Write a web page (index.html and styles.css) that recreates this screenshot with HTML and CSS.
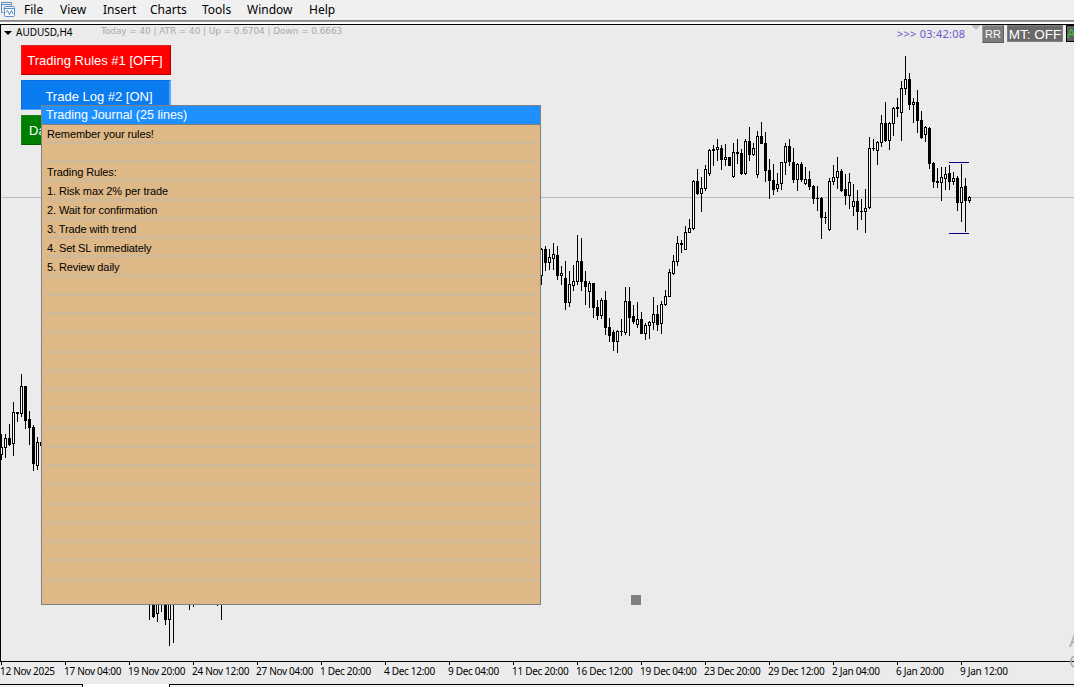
FILE: index.html
```html
<!DOCTYPE html>
<html>
<head>
  <meta charset="utf-8">
  <title>AUDUSD,H4</title>
  <link rel="stylesheet" href="styles.css">
</head>
<body>
  <div class="menubar">
    <svg class="app-icon" width="16" height="16" viewBox="0 0 16 16" fill="none" stroke="#5b8fc7">
      <path d="M3.500 10.500H1.500V.5h10v3"/>
      <path d="M1.500 2.500h10M3.500 6.500l2-2"/>
      <rect x="4.500" y="4.500" width="10" height="10" rx="1" fill="#f4f8fc"/>
      <path d="M4.500 6.500h10M6 10.500l1.500-2 2 4 2-4 1.500 3.500"/>
    </svg>
    <span class="menu-file">File</span>
    <span class="menu-view">View</span>
    <span class="menu-insert">Insert</span>
    <span class="menu-charts">Charts</span>
    <span class="menu-tools">Tools</span>
    <span class="menu-window">Window</span>
    <span class="menu-help">Help</span>
  </div>

  <div class="chart">
    <svg id="candles" class="candles" width="1073" height="636" viewBox="1 25 1073 636" shape-rendering="crispEdges"></svg>

    <div class="chart-header">
      <span class="arrow"></span>
      <span class="symbol">AUDUSD,H4</span>
      <span class="atr">Today = 40 | ATR = 40 | Up = 0.6704 | Down = 0.6663</span>
      <span class="timer">&gt;&gt;&gt; 03:42:08</span>
      <span class="shift-mark"></span>
      <span class="tag tag-rr">RR</span>
      <span class="tag tag-mt">MT: OFF</span>
      <span class="tag tag-a">A</span>
    </div>

    <div class="toggles">
      <div class="toggle red">Trading Rules #1 [OFF]</div>
      <div class="toggle blue">Trade Log #2 [ON]</div>
      <div class="toggle green">Da</div>
    </div>

    <div class="journal">
      <div class="journal-title">Trading Journal (25 lines)</div>
      <div class="journal-lines" id="lines"></div>
    </div>

    <div class="handle"></div>
  </div>

  <div class="axis" id="axis"></div>
  <div class="tabs">
    <div class="tab-left"></div>
    <div class="tab-active"></div>
    <div class="tab-rest"></div>
  </div>
  <div class="watermark">A<br>G</div>

  <script>
    // first candle x, then [high, open/close top, open/close bottom, low, filled]
    const runs = [
      [1, [
        [434, 447, 455, 460, 0], [434, 438, 448, 458, 0], [424, 438, 445, 446, 1],
        [402, 412, 444, 456, 0], [412, 412, 414, 422, 1], [374, 386, 414, 417, 0],
        [386, 386, 421, 429, 1], [411, 419, 428, 445, 1], [425, 427, 464, 471, 1],
        [437, 442, 466, 470, 0], [442, 442, 446, 446, 1]
      ]],
      [149, [
        [600, 600, 601, 620, 1], [600, 600, 617, 618, 1], [600, 600, 614, 622, 0],
        [600, 600, 601, 612, 1], [600, 600, 620, 625, 1], [600, 600, 620, 646, 0],
        [600, 600, 601, 643, 1]
      ]],
      [189, [[600, 600, 601, 610, 1], [600, 600, 601, 607, 1]]],
      [217, [[600, 600, 601, 606, 1], [600, 600, 601, 620, 1]]],
      [541, [
        [248, 249, 276, 285, 0], [246, 249, 263, 271, 1], [249, 257, 263, 270, 0],
        [243, 254, 259, 270, 0], [246, 255, 276, 280, 1], [266, 273, 276, 285, 0],
        [261, 278, 303, 310, 1], [271, 284, 303, 307, 0], [265, 281, 286, 291, 0],
        [235, 261, 282, 285, 0], [238, 261, 282, 291, 1], [271, 281, 287, 305, 1],
        [281, 283, 292, 308, 0], [283, 283, 308, 318, 1], [300, 307, 316, 320, 1],
        [298, 300, 316, 319, 0], [291, 300, 328, 335, 1], [318, 327, 336, 342, 1],
        [330, 332, 342, 351, 1], [330, 331, 342, 353, 0], [319, 331, 332, 336, 1],
        [287, 301, 333, 335, 0], [287, 301, 318, 336, 1], [305, 316, 322, 324, 1],
        [302, 319, 325, 328, 0], [312, 319, 334, 334, 1], [323, 325, 334, 340, 0],
        [321, 322, 326, 339, 0], [297, 314, 323, 330, 0], [305, 314, 325, 331, 1],
        [301, 304, 324, 334, 0], [290, 296, 305, 306, 0], [269, 272, 297, 297, 0],
        [255, 261, 274, 275, 0], [236, 243, 262, 266, 0], [240, 243, 245, 253, 1],
        [226, 232, 250, 250, 0], [219, 228, 233, 233, 0], [180, 181, 229, 230, 0],
        [169, 181, 194, 195, 1], [177, 188, 194, 212, 0], [165, 169, 189, 191, 0],
        [149, 150, 174, 176, 0], [145, 149, 151, 166, 1], [139, 147, 150, 161, 0],
        [145, 148, 160, 170, 1], [144, 157, 160, 166, 0], [157, 157, 166, 166, 1],
        [143, 152, 177, 178, 0], [139, 152, 154, 164, 1], [149, 153, 174, 175, 1],
        [139, 141, 174, 175, 0], [127, 141, 155, 161, 1], [143, 148, 155, 156, 0],
        [131, 136, 175, 178, 0], [122, 136, 144, 144, 1], [132, 143, 171, 182, 1],
        [159, 170, 181, 199, 1], [164, 180, 190, 195, 1], [173, 184, 189, 192, 0],
        [162, 162, 184, 190, 0], [143, 146, 163, 175, 0], [139, 146, 162, 166, 1],
        [148, 162, 180, 183, 1], [163, 164, 180, 191, 0], [162, 164, 180, 182, 1],
        [167, 179, 184, 185, 0], [171, 179, 187, 190, 1], [185, 186, 199, 204, 1],
        [186, 198, 199, 211, 1], [197, 198, 218, 239, 1], [212, 217, 218, 224, 1],
        [178, 181, 230, 231, 0], [165, 177, 182, 185, 0], [157, 171, 178, 189, 0],
        [169, 171, 191, 192, 1], [174, 189, 196, 205, 1], [173, 182, 196, 209, 0],
        [184, 201, 207, 216, 0], [190, 201, 212, 230, 1], [199, 211, 212, 220, 1],
        [189, 208, 212, 233, 0], [137, 148, 208, 209, 0], [139, 148, 149, 151, 1],
        [141, 142, 151, 165, 0], [115, 123, 143, 147, 0], [102, 123, 141, 142, 1],
        [122, 123, 141, 150, 0], [107, 108, 124, 136, 0], [98, 107, 109, 117, 1],
        [81, 88, 113, 141, 0], [56, 79, 89, 95, 0], [73, 79, 105, 110, 1],
        [98, 102, 105, 123, 0], [90, 102, 121, 133, 1], [111, 120, 138, 139, 1],
        [126, 127, 135, 142, 0], [127, 128, 164, 169, 1], [162, 163, 182, 188, 1],
        [168, 181, 183, 188, 1], [167, 177, 183, 201, 0], [167, 174, 179, 190, 0],
        [165, 173, 182, 190, 1], [172, 178, 182, 185, 0], [176, 178, 203, 211, 1],
        [164, 187, 203, 222, 0], [178, 186, 201, 232, 1], [196, 197, 201, 203, 0]
      ]]
    ];

    let svg = '<rect x="1" y="197" width="1073" height="1" fill="#bdbdbd"/>';
    runs.forEach(([start, list]) => {
      list.forEach(([high, top, bottom, low, filled], i) => {
        const x = start + i * 4;
        svg += `<rect x="${x}" y="${high}" width="1" height="${low - high}"/>`;
        // bars that only peek out under the journal have no body
        if (start > 100 && start < 300 && bottom === 601) return;
        svg += `<rect x="${x - 1}" y="${top}" width="3" height="${bottom - top}"/>`;
        if (!filled) {
          svg += `<rect x="${x}" y="${top + 1}" width="1" height="${bottom - top - 2}" fill="#fff"/>`;
        }
      });
    });
    svg += '<path d="M949 162h20v1h-20zM949 233h20v1h-20z" fill="#000080"/>';
    document.getElementById('candles').innerHTML = svg;

    const notes = [
      'Remember your rules!', '', 'Trading Rules:', '1. Risk max 2% per trade',
      '2. Wait for confirmation', '3. Trade with trend', '4. Set SL immediately', '5. Review daily'
    ];
    const lines = document.getElementById('lines');
    for (let i = 0; i < 25; i++) {
      const line = document.createElement('div');
      line.className = 'line';
      line.textContent = notes[i] || '';
      lines.appendChild(line);
    }

    const dates = [
      '12 Nov 2025', '17 Nov 04:00', '19 Nov 20:00', '24 Nov 12:00', '27 Nov 04:00',
      '1 Dec 20:00', '4 Dec 12:00', '9 Dec 04:00', '11 Dec 20:00', '16 Dec 12:00',
      '19 Dec 04:00', '23 Dec 20:00', '29 Dec 12:00', '2 Jan 04:00', '6 Jan 20:00', '9 Jan 12:00'
    ];
    document.getElementById('axis').innerHTML = dates.map(d => `<span class="date">${d}</span>`).join('');
  </script>
</body>
</html>
```

FILE: styles.css
```css
* {
  box-sizing: border-box;
}

body {
  position: relative;
  margin: 0;
  height: 687px;
  display: flex;
  flex-direction: column;
  overflow: hidden;
  background: #ebebeb;
  color: #000;
  font-family: 'Liberation Sans', Arial, sans-serif;
  white-space: nowrap;
}

.menubar {
  display: flex;
  align-items: center;
  height: 24px;
  padding-bottom: 5px;
  background: linear-gradient(#f0f0f0 20px, #808080 20px, #a0a0a0 22px, #fff 22px);
  font-family: 'Noto Sans', sans-serif;
  font-size: 12px;
}

.app-icon {
  margin-right: 8px;
}

.menubar span {
  flex: none;
}

.menu-file { width: 36px; }
.menu-view { width: 43px; }
.menu-insert { width: 47px; }
.menu-charts { width: 52px; }
.menu-tools { width: 45px; }
.menu-window { width: 62px; }

.chart {
  position: relative;
  height: 638px;
  border: 1px solid #000;
  border-right: none;
  overflow: hidden;
}

.candles {
  position: absolute;
  left: 0;
  top: 0;
}

.chart-header {
  position: relative;
  display: flex;
  height: 20px;
  font-size: 11px;
}

.chart-header span {
  flex: none;
}

.arrow {
  width: 0;
  height: 0;
  margin: 6px 4px 0 3px;
  border: 4px solid transparent;
  border-top-color: #000;
  border-bottom: none;
}

.symbol {
  width: 85px;
  font-family: 'Noto Sans', sans-serif;
  font-size: 10px;
}

.atr {
  width: 796px;
  padding-top: 1px;
  font-family: 'DejaVu Sans', sans-serif;
  font-size: 9px;
  letter-spacing: -0.1px;
  color: #a9a9a9;
}

.timer {
  width: 74px;
  padding-top: 1px;
  font-family: 'Noto Sans', sans-serif;
  letter-spacing: 0.25px;
  color: #6a5acd;
}

.shift-mark {
  width: 0;
  height: 0;
  border: 5px solid transparent;
  border-top-color: #c0c0c0;
  border-bottom: none;
}

.tag {
  height: 18px;
  border: 1px solid #808080;
  color: #fff;
  text-align: center;
  line-height: 17px;
}

.tag-rr {
  width: 22px;
  margin-left: 1px;
  background: #7c7c7c;
  border-color: #a0a0a0 #606060 #606060 #a0a0a0;
  font-size: 11px;
}

.tag-mt {
  width: 56px;
  height: 17px;
  margin-left: 3px;
  background: #696969;
  font-size: 13.5px;
}

.tag-a {
  width: 20px;
  height: 17px;
  margin-left: 3px;
  border: 1px solid #000;
  background: #606060;
  color: #32cd32;
  font-size: 13px;
  line-height: 15px;
  text-align: left;
}

.toggles {
  position: absolute;
  left: 20px;
  top: 20px;
  display: flex;
  flex-direction: column;
  gap: 5px;
}

.toggle {
  width: 150px;
  height: 30px;
  border: 1px solid;
  color: #fff;
  font-size: 13px;
  line-height: 29px;
  text-align: center;
}

.red {
  padding-right: 2px;
  background: #ff0000;
  border-color: #e02020 #b00000 #b00000 #e02020;
}

.blue {
  padding-left: 7px;
  padding-top: 1px;
  background: #0a7cf0;
  border-color: #0a6cd8 #50a8ff #50a8ff #0a6cd8;
  border-right-width: 2px;
}

.green {
  padding-left: 7px;
  background: #008000;
  border-color: #208020 #006000 #006000 #208020;
  text-align: left;
}

.journal {
  position: absolute;
  left: 40px;
  top: 80px;
  width: 500px;
  height: 500px;
  border: 1px solid #808080;
  background: #deb887;
}

.journal-title {
  height: 19px;
  padding-left: 4px;
  border-bottom: 1px solid #808080;
  background: #1e90ff;
  color: #fff;
  font-size: 12.5px;
  line-height: 18px;
}

.journal-lines {
  margin: 0 4px;
}

.line {
  height: 19px;
  padding-left: 1px;
  border-bottom: 1px solid #ccb99b;
  box-shadow: inset 0 -1px #d8b98f, inset 0 -2px #ccb99b;
  font-size: 11px;
  line-height: 19px;
  letter-spacing: -0.1px;
}

.line:last-child {
  border-bottom: none;
  box-shadow: none;
}

.handle {
  position: absolute;
  left: 630px;
  top: 570px;
  width: 10px;
  height: 10px;
  background: #808080;
}

.watermark {
  position: absolute;
  left: 1069px;
  top: 630px;
  width: 5px;
  overflow: hidden;
  color: #adadad;
  font-family: 'Noto Sans', sans-serif;
  font-size: 18px;
  line-height: 21px;
}

.axis {
  display: flex;
  height: 22px;
}

.date {
  flex: none;
  width: 64px;
  height: 22px;
  padding-top: 2px;
  background: linear-gradient(#000, #000) 1px 0 / 1px 3px no-repeat;
  font-family: 'Noto Sans', sans-serif;
  font-size: 10px;
  line-height: 14px;
  letter-spacing: -0.3px;
}

.tabs {
  display: flex;
  height: 3px;
  background: #f0f0f0;
}

.tab-left {
  width: 83px;
  border-top: 1px solid #000;
  border-right: 1px solid #000;
}

.tab-active {
  width: 86px;
  background: #fff;
}

.tab-rest {
  flex: 1;
  border-top: 1px solid #000;
  border-left: 1px solid #000;
}
```
